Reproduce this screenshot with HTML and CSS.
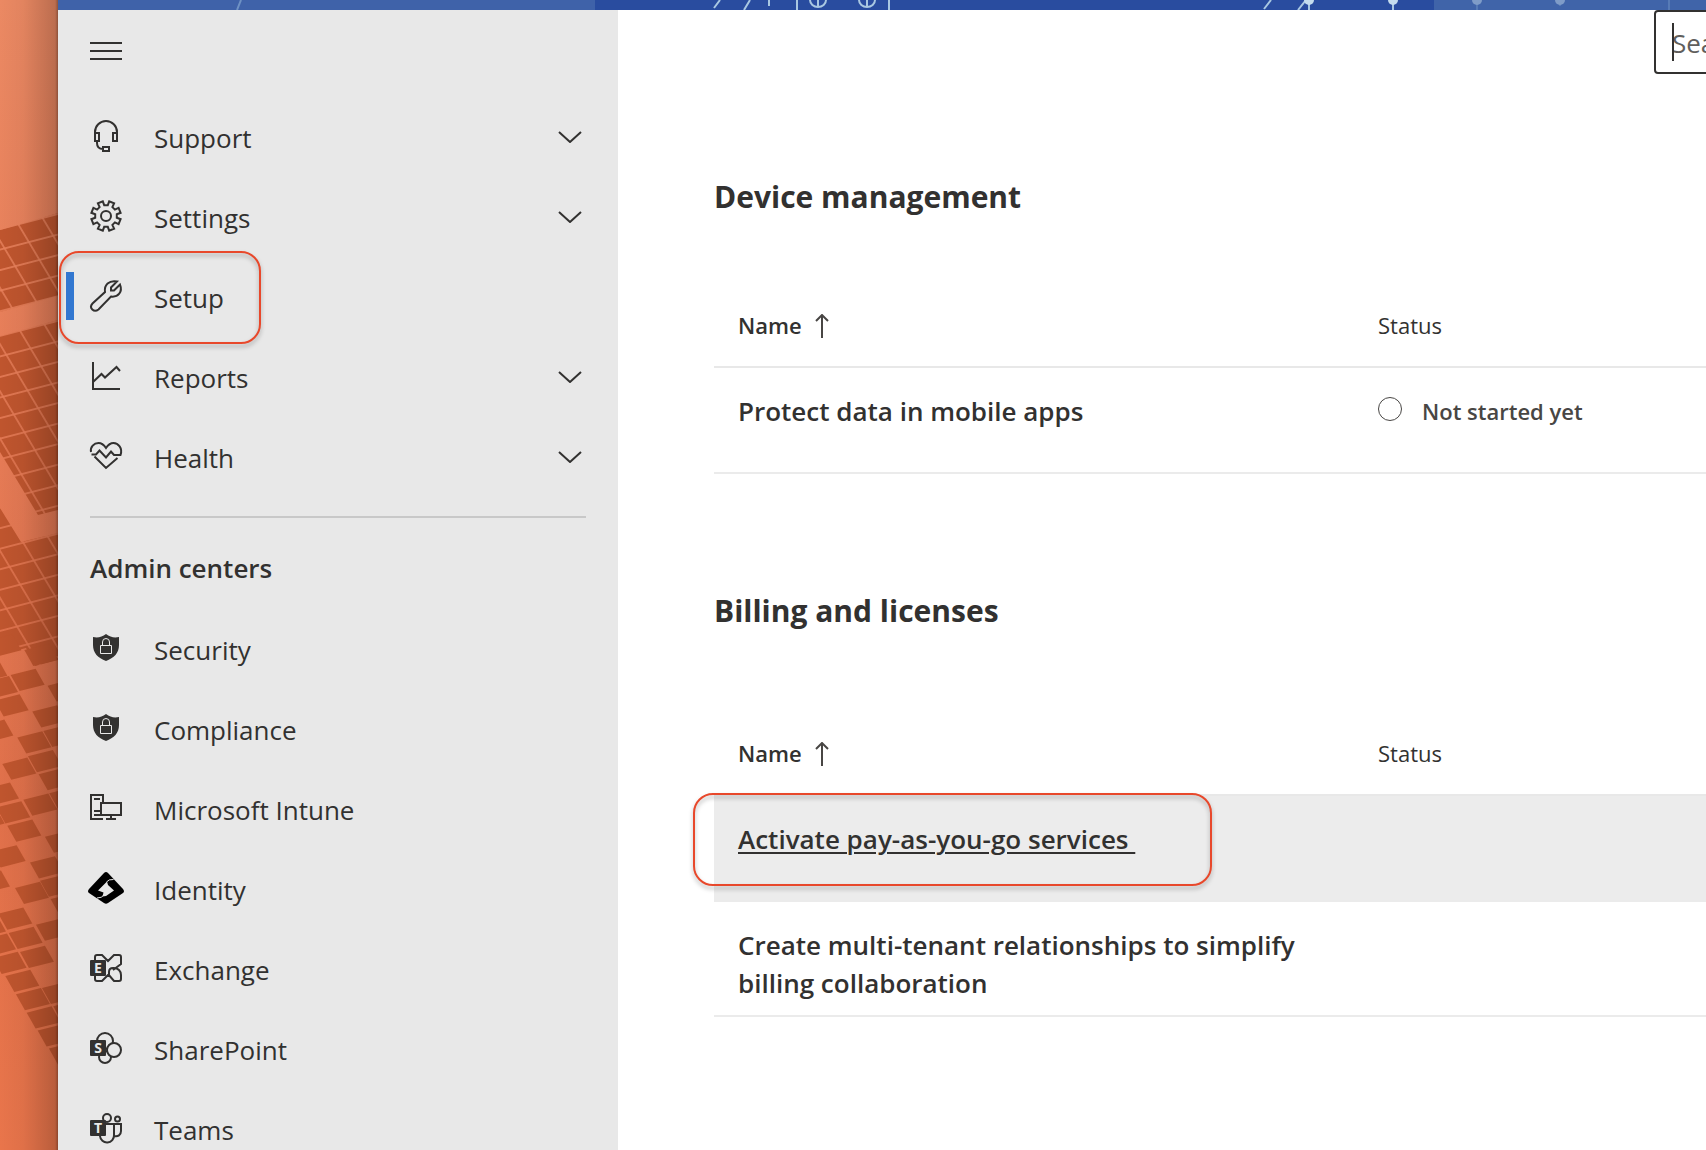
FILE: index.html
```html
<!doctype html>
<html lang="en">
  <head>
    <meta charset="utf-8">
    <title>Setup - Microsoft 365 admin center</title>
    <link rel="stylesheet" href="styles.css">
  </head>
  <body>
    <div class="desktop">
      <svg class="wallpaper" viewBox="0 0 58 1150" preserveAspectRatio="xMinYMin slice" aria-hidden="true">
        <defs>
          <linearGradient id="sky" x1="0" y1="0" x2="0" y2="1">
            <stop offset="0" stop-color="#eb8963"/>
            <stop offset="0.35" stop-color="#e67c57"/>
            <stop offset="0.7" stop-color="#e0704a"/>
            <stop offset="1" stop-color="#e9754b"/>
          </linearGradient>
          <linearGradient id="shade" x1="0" y1="0" x2="1" y2="0">
            <stop offset="0" stop-color="#000" stop-opacity="0"/>
            <stop offset="0.4" stop-color="#000" stop-opacity="0.04"/>
            <stop offset="0.95" stop-color="#000" stop-opacity="0.2"/>
            <stop offset="1" stop-color="#000" stop-opacity="0.4"/>
          </linearGradient>
          <pattern id="tiles1" width="100" height="100" patternUnits="userSpaceOnUse" patternTransform="matrix(.243 -.063 .106 .178 18.3 224.3)">
            <rect x="3" y="4" width="94" height="92" fill="#bf552e"/>
          </pattern>
          <pattern id="tiles2" width="100" height="100" patternUnits="userSpaceOnUse" patternTransform="matrix(.243 -.063 .106 .178 20 330.7)">
            <rect x="3" y="4" width="94" height="92" fill="#bf552e"/>
          </pattern>
          <pattern id="tiles3" width="100" height="100" patternUnits="userSpaceOnUse" patternTransform="matrix(.243 -.063 .106 .178 23.3 542.7)">
            <rect x="3" y="4" width="94" height="92" fill="#bf552e"/>
          </pattern>
          <path id="tile" d="M0 0l75-19 27 48-75 19z"/>
        </defs>
        <rect width="58" height="1150" fill="url(#sky)"/>
        <path fill="url(#tiles1)" d="M0 230l58-17v83l-58 16z"/>
        <path fill="url(#tiles2)" d="M0 336l58-16v190l-20 5-38-63z"/>
        <path fill="url(#tiles3)" d="M0 508l21 34 37-9v127l-23 6-9-18-26 7z"/>
        <g fill="#bf552e" transform="translate(0 650) scale(0.333)">
          <use href="#tile" x="-38" y="-28"/><use href="#tile" x="73" y="0"/>
          <use href="#tile" x="-80" y="48"/><use href="#tile" x="32" y="75"/>
          <use href="#tile" x="-48" y="97"/><use href="#tile" x="143" y="107"/>
          <use href="#tile" x="-16" y="152"/><use href="#tile" x="97" y="185"/>
          <use href="#tile" x="-62" y="228"/><use href="#tile" x="52" y="263"/>
          <use href="#tile" x="130" y="243"/><use href="#tile" x="84" y="319"/>
          <use href="#tile" x="7" y="342"/><use href="#tile" x="116" y="373"/>
          <use href="#tile" x="-45" y="417"/><use href="#tile" x="70" y="450"/>
          <use href="#tile" x="148" y="430"/><use href="#tile" x="-11" y="473"/>
          <use href="#tile" x="-88" y="492"/><use href="#tile" x="22" y="528"/>
          <use href="#tile" x="135" y="561"/><use href="#tile" x="-25" y="605"/>
          <use href="#tile" x="90" y="638"/><use href="#tile" x="-72" y="681"/>
          <use href="#tile" x="120" y="693"/><use href="#tile" x="45" y="715"/>
          <use href="#tile" x="152" y="748"/><use href="#tile" x="-5" y="792"/>
          <use href="#tile" x="108" y="825"/><use href="#tile" x="-84" y="816"/>
          <use href="#tile" x="26" y="850"/><use href="#tile" x="-54" y="870"/>
          <use href="#tile" x="60" y="907"/><use href="#tile" x="-22" y="925"/>
          <use href="#tile" x="16" y="979"/><use href="#tile" x="126" y="1015"/>
          <use href="#tile" x="48" y="1034"/><use href="#tile" x="160" y="1070"/>
          <use href="#tile" x="80" y="1089"/><use href="#tile" x="113" y="1143"/>
          <use href="#tile" x="147" y="1197"/>
        </g>
        <rect width="58" height="1150" fill="url(#shade)"/>
      </svg>

      <div class="window">
        <div class="banner">
          <svg width="1648" height="10" viewBox="58 0 1648 10" aria-hidden="true">
            <rect x="58" width="537" height="10" fill="#3f62a9"/>
            <rect x="595" width="839" height="10" fill="#294c9f"/>
            <rect x="1434" width="272" height="10" fill="#4064a9"/>
            <g fill="none" stroke="#a9c8e2" stroke-width="2">
              <path stroke="#6f92c4" d="M241 0l-4 10"/>
              <path d="M720 0l-6 8M750 0l-6 10M769 0v6M797 0v10M818 0v6M867 0v6M889 0v10M1271 0l-7 9M1306 0l-8 10M1309 4v6M1393 4v6"/>
              <path d="M810 0a8 7 0 0 0 16 0M859 0a8 7 0 0 0 16 0"/>
              <path stroke="#6f92c4" stroke-width="1" d="M1477 3v7M1560 3v3M1669 0v10"/>
            </g>
            <g fill="#c4dcee">
              <circle cx="1309" cy="0" r="5"/><circle cx="1393" cy="0" r="5"/>
              <circle cx="1477" cy="0" r="5" fill="#7f9cc8"/><circle cx="1560" cy="0" r="5" fill="#7f9cc8"/>
            </g>
          </svg>
        </div>

        <div class="columns">
          <nav class="sidebar">
            <button class="menu-button" type="button" aria-label="Collapse navigation">
              <svg class="icon" viewBox="0 0 32 32"><path d="M0 8h32M0 16h32M0 24h32"/></svg>
            </button>
            <ul class="nav-list">
              <li><a class="nav-item" href="#support">
                <svg class="icon" viewBox="0 0 32 32"><path d="M5 13v-1a11 11 0 0 1 22 0v1M5 13h4v8H5zM23 13h4v8h-4zM7 21v2c0 4 2 6 6 6M13 27h6v4h-6z"/></svg>
                <span class="label">Support</span>
                <svg class="chevron" viewBox="0 0 24 12"><path d="M1 1l11 10L23 1"/></svg>
              </a></li>
              <li><a class="nav-item" href="#settings">
                <svg class="icon" viewBox="0 0 32 32"><path d="M12.800 1.400 14.200 5.200H17.800L19.200 1.400 24.100 3.400 22.400 7.100 24.900 9.600 28.600 7.900 30.600 12.800 26.800 14.200V17.800L30.600 19.200 28.600 24.100 24.900 22.400 22.400 24.900 24.100 28.600 19.200 30.600 17.800 26.800H14.200L12.800 30.600 7.900 28.600 9.600 24.900 7.100 22.400 3.400 24.100 1.400 19.200 5.200 17.800V14.200L1.400 12.800 3.400 7.900 7.100 9.600 9.600 7.100 7.900 3.400Z"/><circle cx="16" cy="16" r="5"/></svg>
                <span class="label">Settings</span>
                <svg class="chevron" viewBox="0 0 24 12"><path d="M1 1l11 10L23 1"/></svg>
              </a></li>
              <li><a class="nav-item selected" href="#setup" aria-current="page">
                <svg class="icon" viewBox="0 0 32 32"><path d="M15 12C14 5 19 0 27 1.500L21 7.500v3h3L30 4.500C33 12 28 17.500 21 16.500L8.500 29.500C4 33-1.500 28 2.500 23.500Z"/></svg>
                <span class="label">Setup</span>
                <span class="callout callout-nav"></span>
              </a></li>
              <li><a class="nav-item" href="#reports">
                <svg class="icon" viewBox="0 0 32 32"><path d="M3 2v27h27M3 22l8.500-8 3.500 3.500L26.500 7l3.500 4"/></svg>
                <span class="label">Reports</span>
                <svg class="chevron" viewBox="0 0 24 12"><path d="M1 1l11 10L23 1"/></svg>
              </a></li>
              <li><a class="nav-item" href="#health">
                <svg class="icon" viewBox="0 0 32 32"><path d="M1 12C0 7 4 3 8.500 3c3 0 5.500 2 7.500 5 2-3 4.500-5 7.500-5C28 3 33 8 30.500 15H24l-3-3.500-5 6L9.500 10.500 6 14.500H1.500M4.500 16.500 16 28l11.500-10"/></svg>
                <span class="label">Health</span>
                <svg class="chevron" viewBox="0 0 24 12"><path d="M1 1l11 10L23 1"/></svg>
              </a></li>
            </ul>

            <h2 class="nav-heading">Admin centers</h2>
            <ul class="nav-list">
              <li><a class="nav-item" href="#security">
                <svg class="icon" viewBox="0 0 32 32"><path class="solid" d="M3 5c5 1 9 0 13-3 4 3 8 4 13 3v8c0 8-5 13-13 16C8 26 3 21 3 13Z"/><path class="cut" d="M10.500 13.500h11v8h-11zM12.500 13.500V10a3.500 3.500 0 0 1 7 0v3.500"/></svg>
                <span class="label">Security</span>
              </a></li>
              <li><a class="nav-item" href="#compliance">
                <svg class="icon" viewBox="0 0 32 32"><path class="solid" d="M3 5c5 1 9 0 13-3 4 3 8 4 13 3v8c0 8-5 13-13 16C8 26 3 21 3 13Z"/><path class="cut" d="M10.500 13.500h11v8h-11zM12.500 13.500V10a3.500 3.500 0 0 1 7 0v3.500"/></svg>
                <span class="label">Compliance</span>
              </a></li>
              <li><a class="nav-item" href="#intune">
                <svg class="icon" viewBox="0 0 32 32"><path d="M13 11V3H1v24h12M4 7h6M4 19h7M4 23h7M11 11h20v12H11zM21 23v4M16 27h10"/></svg>
                <span class="label">Microsoft Intune</span>
              </a></li>
              <li><a class="nav-item" href="#identity">
                <svg class="icon" viewBox="0 0 32 32"><path class="logo" d="M14 1q2-2 4 0L33 17q2 2.500 0 4L18 31q-2 1.500-4 0L-1 21q-2-1.500 0-4Z"/><path class="hole" d="M17 9.500 8 18.500 13.500 20.500 12.500 24.500 16 24 24 18.500 18 13Z"/><path class="gap" d="M16.500 10q2-3 7-2.500M7 26q5 0 7-3"/></svg>
                <span class="label">Identity</span>
              </a></li>
              <li><a class="nav-item" href="#exchange">
                <svg class="icon" viewBox="0 0 32 32"><path d="M5 9V5q0-2 2-2h5l6 6 6-6h5q2 0 2 2v7l-8 6M5 23v4q0 2 2 2h5l7-7v-2q0-4 4-4h1c4 0 7 3 7 7v4q0 2-2 2h-5l-6-7"/><rect class="solid" y="8" width="16" height="16" rx="1"/><text x="8" y="21">E</text></svg>
                <span class="label">Exchange</span>
              </a></li>
              <li><a class="nav-item" href="#sharepoint">
                <svg class="icon" viewBox="0 0 32 32"><circle cx="15" cy="9" r="8"/><circle cx="15" cy="25" r="6"/><circle class="bubble" cx="24" cy="18" r="7"/><rect class="solid" y="8" width="16" height="16" rx="1"/><text x="8" y="21">S</text></svg>
                <span class="label">SharePoint</span>
              </a></li>
              <li><a class="nav-item" href="#teams">
                <svg class="icon" viewBox="0 0 32 32"><circle cx="17" cy="6" r="4"/><circle cx="27.500" cy="7" r="2.500"/><path d="M16 12h8v11a7 7 0 0 1-14 1M24 12h7v7c0 4-3 6-7 5"/><rect class="solid" y="8" width="16" height="16" rx="1"/><text x="8" y="21">T</text></svg>
                <span class="label">Teams</span>
              </a></li>
            </ul>
          </nav>

          <main class="content">
            <div class="search">
              <input class="search-box" type="text" placeholder="Search" aria-label="Search">
              <span class="caret"></span>
            </div>

            <section class="group">
              <h2>Device management</h2>
              <table>
                <thead>
                  <tr>
                    <th class="name">Name <svg class="sort" viewBox="0 0 14 24"><path d="M7 24V1M1 7l6-6 6 6"/></svg></th>
                    <th class="status">Status</th>
                  </tr>
                </thead>
                <tbody>
                  <tr>
                    <td class="name">Protect data in mobile apps</td>
                    <td class="status"><span class="state"><span class="circle"></span>Not started yet</span></td>
                  </tr>
                </tbody>
              </table>
            </section>

            <section class="group billing">
              <h2>Billing and licenses</h2>
              <table>
                <thead>
                  <tr>
                    <th class="name">Name <svg class="sort" viewBox="0 0 14 24"><path d="M7 24V1M1 7l6-6 6 6"/></svg></th>
                    <th class="status">Status</th>
                  </tr>
                </thead>
                <tbody>
                  <tr class="hover">
                    <td class="name"><a href="#payg">Activate pay-as-you-go services&nbsp;</a><span class="callout callout-row"></span></td>
                    <td class="status"></td>
                  </tr>
                  <tr>
                    <td class="name">Create multi-tenant relationships to simplify billing collaboration</td>
                    <td class="status"></td>
                  </tr>
                </tbody>
              </table>
            </section>
          </main>
        </div>
      </div>
    </div>
  </body>
</html>
```
FILE: styles.css
```css
* {
  box-sizing: border-box;
}
body {
  margin: 0;
  color: #323130;
  font-family: "Open Sans", "Noto Sans", sans-serif;
  font-size: 26px;
  line-height: 38px;
}
h2, ul {
  margin: 0;
  padding: 0;
}
.desktop {
  display: flex;
  height: 100vh;
  overflow: hidden;
}
.wallpaper {
  flex: none;
  width: 58px;
  height: 100%;
}
.window {
  display: flex;
  flex: 1;
  flex-direction: column;
  min-width: 0;
  background: #fff;
}
.banner {
  flex: none;
  height: 10px;
  overflow: hidden;
  background: #4064a9;
}
.banner svg {
  display: block;
}
.columns {
  display: flex;
  flex: 1;
  min-height: 0;
}

/* navigation */
.sidebar {
  flex: none;
  width: 560px;
  padding: 0 32px;
  background: #e8e8e8;
}
.menu-button {
  display: block;
  margin: 25px 0 29px;
  padding: 0;
  border: 0;
  background: none;
}
.icon {
  display: block;
  flex: none;
  width: 32px;
  height: 32px;
  overflow: visible;
  fill: none;
  stroke: #323130;
  stroke-width: 2;
}
.icon .solid {
  fill: #323130;
  stroke: none;
}
.icon .cut {
  stroke: #e8e8e8;
  stroke-width: 1;
}
.icon .logo {
  fill: #000;
  stroke: none;
}
.icon .hole {
  fill: #e8e8e8;
  stroke: none;
}
.icon .gap {
  stroke: #e8e8e8;
  stroke-width: 1;
}
.icon .bubble {
  fill: #e8e8e8;
}
.icon text {
  fill: #e8e8e8;
  stroke: none;
  font-size: 14px;
  font-weight: 700;
  text-anchor: middle;
}
.nav-list {
  list-style: none;
}
.nav-item {
  position: relative;
  display: flex;
  align-items: center;
  gap: 32px;
  height: 80px;
  color: inherit;
  text-decoration: none;
}
.label {
  flex: 1;
  padding-top: 4px;
}
.chevron {
  width: 24px;
  height: 12px;
  margin: 2px 4px 0 0;
  fill: none;
  stroke: #323130;
  stroke-width: 2;
}
.selected::before {
  content: "";
  position: absolute;
  left: -24px;
  width: 8px;
  height: 48px;
  background: #3277d0;
}
.nav-heading {
  margin-top: 20px;
  padding: 30px 0 20px;
  border-top: 2px solid #c8c8c8;
  font-size: 26px;
  font-weight: 600;
  line-height: 40px;
}

/* red marker boxes over the page */
.callout {
  position: absolute;
  height: 93px;
  border: 2px solid #e8482b;
  border-radius: 20px;
  filter: drop-shadow(0 3px 2px rgba(0, 0, 0, 0.3));
  pointer-events: none;
}
.callout-nav {
  top: -5px;
  left: -31px;
  width: 202px;
}
.callout-row {
  top: -3px;
  left: -21px;
  width: 519px;
}

/* content */
.content {
  flex: 1;
  min-width: 0;
  padding-left: 96px;
  overflow: hidden;
}
.search {
  position: relative;
  width: 400px;
  margin-right: -348px;
  margin-left: auto;
}
.search-box {
  display: block;
  width: 100%;
  height: 64px;
  padding: 2px 16px 0;
  border: 2px solid #323130;
  border-radius: 4px;
  font: inherit;
}
.search-box::placeholder {
  color: #605e5c;
  opacity: 1;
}
.caret {
  position: absolute;
  top: 13px;
  left: 18px;
  width: 2px;
  height: 38px;
  background: #323130;
}
.group {
  padding-top: 103px;
}
.group h2 {
  margin-bottom: 69px;
  font-size: 30px;
  font-weight: 700;
  line-height: 40px;
}
.billing {
  padding-top: 117px;
}
.billing h2 {
  margin-bottom: 83px;
}
table {
  width: 100%;
  table-layout: fixed;
  border-collapse: separate;
  border-spacing: 0;
}
th {
  height: 82px;
  padding: 0 0 2px;
  border-bottom: 2px solid #e8e8e8;
  font-size: 22px;
  font-weight: 400;
  text-align: left;
}
td {
  height: 106px;
  padding: 24px 0 13px;
  border-bottom: 2px solid #ebebeb;
  vertical-align: top;
}
.name {
  position: relative;
  width: 664px;
  padding-right: 64px;
  padding-left: 24px;
  font-weight: 600;
}
.name a {
  color: inherit;
  text-decoration-thickness: 2px;
  text-underline-offset: 3px;
}
.sort {
  width: 14px;
  height: 24px;
  margin-left: 8px;
  vertical-align: -4px;
  fill: none;
  stroke: #484644;
  stroke-width: 2;
}
.hover td {
  background: #ececec;
}
.state {
  display: flex;
  align-items: center;
  gap: 20px;
  color: #484644;
  font-size: 22px;
  font-weight: 600;
}
.circle {
  width: 24px;
  height: 24px;
  margin-bottom: 4px;
  border: 1px solid #484644;
  border-radius: 50%;
}
```
